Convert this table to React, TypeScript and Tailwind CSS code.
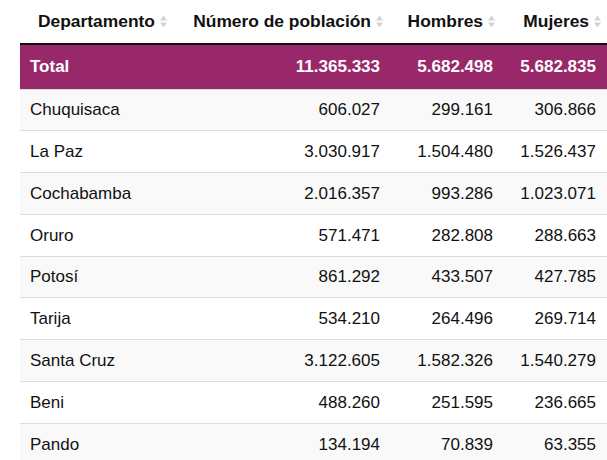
import React from "react";

const ROWS: [string, string, string, string][] = [
  ["Chuquisaca", "606.027", "299.161", "306.866"],
  ["La Paz", "3.030.917", "1.504.480", "1.526.437"],
  ["Cochabamba", "2.016.357", "993.286", "1.023.071"],
  ["Oruro", "571.471", "282.808", "288.663"],
  ["Potosí", "861.292", "433.507", "427.785"],
  ["Tarija", "534.210", "264.496", "269.714"],
  ["Santa Cruz", "3.122.605", "1.582.326", "1.540.279"],
  ["Beni", "488.260", "251.595", "236.665"],
  ["Pando", "134.194", "70.839", "63.355"],
];

function SortIcon() {
  return (
    <svg width="7" height="13" viewBox="0 0 7 13" className="ml-[5px] shrink-0">
      <path d="M3.5 0.5 L7 5.5 L0 5.5 Z" fill="#d4d4d4" />
      <path d="M0 7.5 L7 7.5 L3.5 12.5 Z" fill="#d4d4d4" />
    </svg>
  );
}

function Th({ label, className }: { label: string; className: string }) {
  return (
    <th className={"h-[44px] p-0 font-bold align-middle text-[17.4px] " + className}>
      <div className="flex items-center justify-end">
        <span>{label}</span>
        <SortIcon />
      </div>
    </th>
  );
}

export default function App() {
  return (
    <div className="bg-white w-[607px] h-[460px] overflow-hidden pl-[20px] font-['Liberation_Sans',Arial,sans-serif] text-[#111]">
      <table className="w-[590px] border-collapse table-fixed text-[17px]">
        <colgroup>
          <col className="w-[165px]" />
          <col className="w-[205px]" />
          <col className="w-[113px]" />
          <col className="w-[107px]" />
        </colgroup>
        <thead>
          <tr className="border-b-2 border-[#111]">
            <th className="h-[44px] p-0 font-bold align-middle pl-[18px] text-[17.4px]">
              <div className="flex items-center">
                <span>Departamento</span>
                <SortIcon />
              </div>
            </th>
            <Th label="Número de población" className="pr-[7px]" />
            <Th label="Hombres" className="pr-[8px]" />
            <Th label="Mujeres" className="pr-[9px]" />
          </tr>
        </thead>
        <tbody>
          <tr className="bg-[#99286b] text-white font-bold h-[45px]">
            <td className="pl-[10px]">Total</td>
            <td className="text-right pr-[10px]">11.365.333</td>
            <td className="text-right pr-[10px]">5.682.498</td>
            <td className="text-right pr-[14px]">5.682.835</td>
          </tr>
          {ROWS.map((r, i) => (
            <tr
              key={r[0]}
              className={
                "h-[41.8px] border-t border-[#ddd] " +
                (i % 2 === 0 ? "bg-[#f9f9f9]" : "bg-white")
              }
            >
              <td className="pl-[10px]">{r[0]}</td>
              <td className="text-right pr-[10px]">{r[1]}</td>
              <td className="text-right pr-[10px]">{r[2]}</td>
              <td className="text-right pr-[14px]">{r[3]}</td>
            </tr>
          ))}
        </tbody>
      </table>
    </div>
  );
}
